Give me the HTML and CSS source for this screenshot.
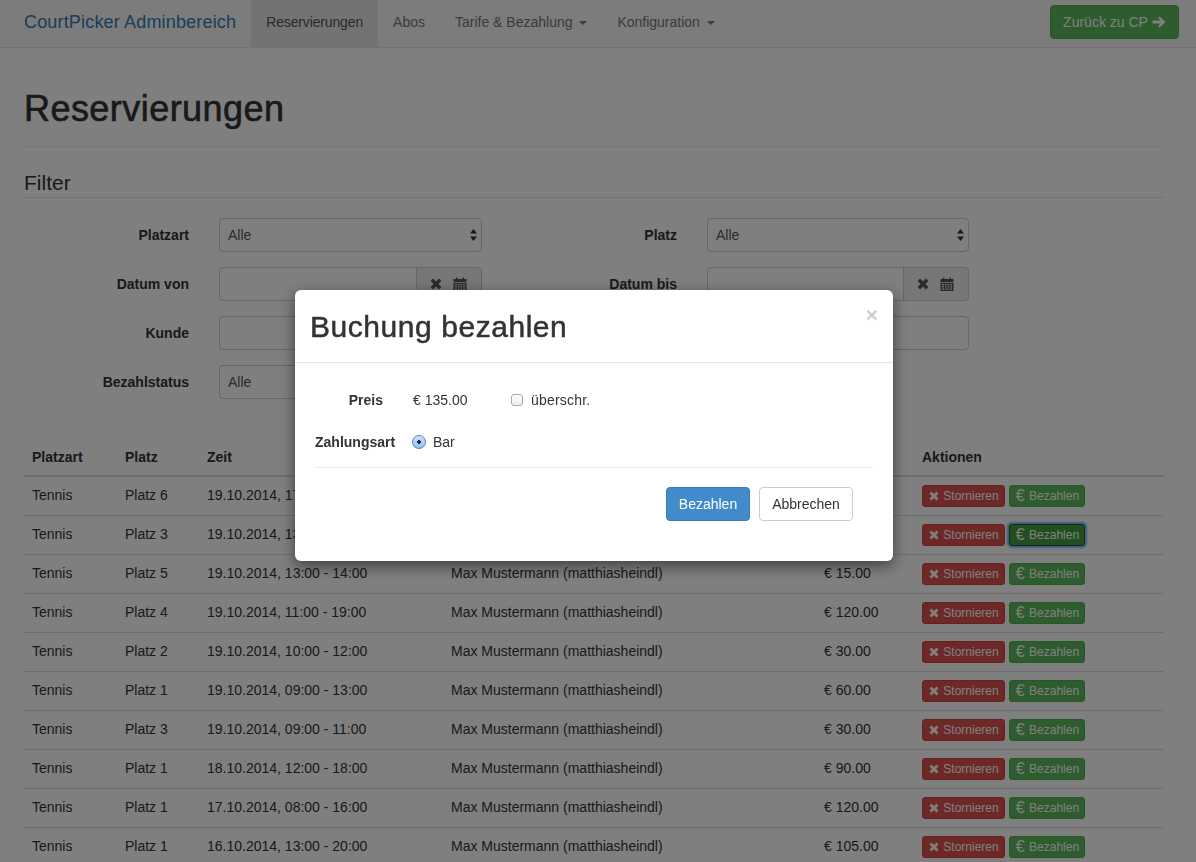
FILE: index.html
```html
<!DOCTYPE html>
<html lang="de">
<head>
<meta charset="utf-8">
<title>CourtPicker Adminbereich</title>
<link rel="stylesheet" href="styles.css">
</head>
<body>
<svg class="defs" width="0" height="0" aria-hidden="true">
  <symbol id="i-x" viewBox="0 0 12 12"><path d="M0.6 3 L3 0.6 L6 3.6 L9 0.6 L11.4 3 L8.4 6 L11.4 9 L9 11.4 L6 8.4 L3 11.4 L0.6 9 L3.6 6 Z"/></symbol>
  <symbol id="i-cal" viewBox="0 0 14 14"><path d="M3 0.5h1.5v1.5h5V0.5H11v1.5h2.5v3H0.5V2H3zM0.5 5.8h13V14H0.5zM2 7v1.3h2V7zm3 0v1.3h1.6V7zm2.6 0v1.3h1.6V7zm2.6 0v1.3H12V7zM2 9.2v1.3h2V9.2zm3 0v1.3h1.6V9.2zm2.6 0v1.3h1.6V9.2zm2.6 0v1.3H12V9.2zM2 11.4v1.3h2v-1.3zm3 0v1.3h1.6v-1.3zm2.6 0v1.3h1.6v-1.3zm2.6 0v1.3H12v-1.3z" fill-rule="evenodd"/></symbol>
  <symbol id="i-arrow" viewBox="0 0 14 12"><path d="M7.6 0.6 L13.6 6 L7.6 11.4 L6.2 10 L8.6 7.6 H0.4 V4.4 H8.6 L6.2 2 Z"/></symbol>
  <symbol id="i-updown" viewBox="0 0 7 12"><path d="M3.5 0 L7 4.6 H0 Z M0 7.4 H7 L3.5 12 Z"/></symbol>
</svg>

<nav class="navbar">
  <a class="brand">CourtPicker Adminbereich</a>
  <ul class="nav">
    <li class="nav-item active">Reservierungen</li>
    <li class="nav-item">Abos</li>
    <li class="nav-item">Tarife &amp; Bezahlung <span class="caret"></span></li>
    <li class="nav-item">Konfiguration <span class="caret"></span></li>
  </ul>
  <a class="btn btn-success btn-back">Zurück zu CP <svg class="ico ico-arrow"><use href="#i-arrow"/></svg></a>
</nav>

<main class="container">
  <h1 class="page-title">Reservierungen</h1>
  <h2 class="legend">Filter</h2>
  <form class="filter">
    <label class="flabel">Platzart</label>
    <div class="select"><select class="control"><option>Alle</option></select><svg class="updown"><use href="#i-updown"/></svg></div>
    <label class="flabel">Platz</label>
    <div class="select"><select class="control"><option>Alle</option></select><svg class="updown"><use href="#i-updown"/></svg></div>

    <label class="flabel">Datum von</label>
    <div class="group"><input class="control group-input" type="text"><span class="addon"><svg class="ico ico-x"><use href="#i-x"/></svg><svg class="ico ico-cal"><use href="#i-cal"/></svg></span></div>
    <label class="flabel">Datum bis</label>
    <div class="group"><input class="control group-input" type="text"><span class="addon"><svg class="ico ico-x"><use href="#i-x"/></svg><svg class="ico ico-cal"><use href="#i-cal"/></svg></span></div>

    <label class="flabel">Kunde</label>
    <input class="control" type="text">
    <label class="flabel"></label>
    <input class="control" type="text">

    <label class="flabel">Bezahlstatus</label>
    <div class="select"><select class="control"><option>Alle</option></select><svg class="updown"><use href="#i-updown"/></svg></div>
  </form>

  <table class="table">
    <colgroup><col class="c1"><col class="c2"><col class="c3"><col class="c4"><col class="c5"><col class="c6"></colgroup>
    <thead><tr><th>Platzart</th><th>Platz</th><th>Zeit</th><th>Kunde</th><th>Preis</th><th>Aktionen</th></tr></thead>
    <tbody>
      <tr><td>Tennis</td><td>Platz 6</td><td>19.10.2014, 17:00 - 20:00</td><td></td><td></td><td><a class="btn-xs red"><svg class="ico ico-xs"><use href="#i-x"/></svg> Stornieren</a><a class="btn-xs green"><span class="euro">€</span> Bezahlen</a></td></tr>
      <tr><td>Tennis</td><td>Platz 3</td><td>19.10.2014, 13:00 - 22:00</td><td></td><td></td><td><a class="btn-xs red"><svg class="ico ico-xs"><use href="#i-x"/></svg> Stornieren</a><a class="btn-xs green focus"><span class="euro">€</span> Bezahlen</a></td></tr>
      <tr><td>Tennis</td><td>Platz 5</td><td>19.10.2014, 13:00 - 14:00</td><td>Max Mustermann (matthiasheindl)</td><td>€ 15.00</td><td><a class="btn-xs red"><svg class="ico ico-xs"><use href="#i-x"/></svg> Stornieren</a><a class="btn-xs green"><span class="euro">€</span> Bezahlen</a></td></tr>
      <tr><td>Tennis</td><td>Platz 4</td><td>19.10.2014, 11:00 - 19:00</td><td>Max Mustermann (matthiasheindl)</td><td>€ 120.00</td><td><a class="btn-xs red"><svg class="ico ico-xs"><use href="#i-x"/></svg> Stornieren</a><a class="btn-xs green"><span class="euro">€</span> Bezahlen</a></td></tr>
      <tr><td>Tennis</td><td>Platz 2</td><td>19.10.2014, 10:00 - 12:00</td><td>Max Mustermann (matthiasheindl)</td><td>€ 30.00</td><td><a class="btn-xs red"><svg class="ico ico-xs"><use href="#i-x"/></svg> Stornieren</a><a class="btn-xs green"><span class="euro">€</span> Bezahlen</a></td></tr>
      <tr><td>Tennis</td><td>Platz 1</td><td>19.10.2014, 09:00 - 13:00</td><td>Max Mustermann (matthiasheindl)</td><td>€ 60.00</td><td><a class="btn-xs red"><svg class="ico ico-xs"><use href="#i-x"/></svg> Stornieren</a><a class="btn-xs green"><span class="euro">€</span> Bezahlen</a></td></tr>
      <tr><td>Tennis</td><td>Platz 3</td><td>19.10.2014, 09:00 - 11:00</td><td>Max Mustermann (matthiasheindl)</td><td>€ 30.00</td><td><a class="btn-xs red"><svg class="ico ico-xs"><use href="#i-x"/></svg> Stornieren</a><a class="btn-xs green"><span class="euro">€</span> Bezahlen</a></td></tr>
      <tr><td>Tennis</td><td>Platz 1</td><td>18.10.2014, 12:00 - 18:00</td><td>Max Mustermann (matthiasheindl)</td><td>€ 90.00</td><td><a class="btn-xs red"><svg class="ico ico-xs"><use href="#i-x"/></svg> Stornieren</a><a class="btn-xs green"><span class="euro">€</span> Bezahlen</a></td></tr>
      <tr><td>Tennis</td><td>Platz 1</td><td>17.10.2014, 08:00 - 16:00</td><td>Max Mustermann (matthiasheindl)</td><td>€ 120.00</td><td><a class="btn-xs red"><svg class="ico ico-xs"><use href="#i-x"/></svg> Stornieren</a><a class="btn-xs green"><span class="euro">€</span> Bezahlen</a></td></tr>
      <tr><td>Tennis</td><td>Platz 1</td><td>16.10.2014, 13:00 - 20:00</td><td>Max Mustermann (matthiasheindl)</td><td>€ 105.00</td><td><a class="btn-xs red"><svg class="ico ico-xs"><use href="#i-x"/></svg> Stornieren</a><a class="btn-xs green"><span class="euro">€</span> Bezahlen</a></td></tr>
    </tbody>
  </table>
</main>

<div class="backdrop"></div>

<section class="modal">
  <header class="modal-header">
    <h3 class="modal-title">Buchung bezahlen</h3>
    <span class="close">×</span>
  </header>
  <div class="modal-body">
    <div class="mrow mrow-price">
      <label class="mlabel">Preis</label>
      <span class="price">€ 135.00</span>
      <input class="check" type="checkbox">
      <span class="checktext">überschr.</span>
    </div>
    <div class="mrow mrow-pay">
      <label class="mlabel-wide">Zahlungsart</label>
      <input class="radio" type="radio" checked>
      <span class="radiotext">Bar</span>
    </div>
    <hr class="divider">
    <div class="actions">
      <a class="btn btn-primary">Bezahlen</a>
      <a class="btn btn-default">Abbrechen</a>
    </div>
  </div>
</section>
</body>
</html>
```
FILE: styles.css
```css
* { box-sizing: border-box; }
html, body { height: 100%; overflow: hidden; }
body {
  margin: 0;
  background: #fff;
  color: #333;
  font: 14px/20px "Liberation Sans", Arial, sans-serif;
}
.defs { position: absolute; }
.ico { display: inline-block; fill: currentColor; }

/* Navbar */
.navbar {
  display: flex;
  align-items: stretch;
  height: 48px;
  padding-left: 24px;
  background: #f8f8f8;
  border-bottom: 1px solid #e7e7e7;
}
.brand {
  color: #337ab7;
  font-size: 18px;
  line-height: 44px;
  letter-spacing: .17px;
  margin-right: 15px;
}
.nav { display: flex; margin: 0; padding: 0; list-style: none; }
.nav-item { padding: 12px 15px 0; color: #777; height: 47px; }
.nav-item.active { background: #e7e7e7; color: #555; letter-spacing: -.14px; }
.caret {
  display: inline-block;
  width: 0;
  height: 0;
  margin-left: 3px;
  vertical-align: middle;
  border-top: 4px solid;
  border-left: 4px solid transparent;
  border-right: 4px solid transparent;
}
.btn {
  display: inline-flex;
  align-items: center;
  justify-content: center;
  height: 34px;
  padding: 0 12px;
  border: 1px solid transparent;
  border-radius: 4px;
  font-size: 14px;
}
.btn-success { background: #5cb85c; border-color: #4cae4c; color: #fff; }
.btn-back { width: 129px; margin: 5px 17px 0 auto; gap: 4px; }
.ico-arrow { width: 14px; height: 12px; }

/* Page */
.container { width: 1140px; margin-left: 24px; }
.page-title {
  margin: 41px 0 20px;
  padding-bottom: 17px;
  border-bottom: 1px solid #eee;
  font-size: 36px;
  line-height: 40px;
  font-weight: 400;
  letter-spacing: .45px;
  -webkit-text-stroke: .6px currentColor;
}
.legend {
  margin: 0 0 20px;
  height: 31px;
  border-bottom: 1px solid #e5e5e5;
  font-size: 21px;
  line-height: 32px;
  font-weight: 400;
}

/* Filter */
.filter {
  display: grid;
  grid-template-columns: 165px 263px 165px 262px;
  column-gap: 30px;
  row-gap: 15px;
  margin-bottom: 40px;
  width: 945px;
}
.flabel { font-weight: 700; text-align: right; line-height: 34px; }
.control {
  display: block;
  width: 100%;
  height: 34px;
  padding: 6px 8px;
  border: 1px solid #ccc;
  border-radius: 4px;
  background: #fff;
  color: #555;
  font: 14px/20px "Liberation Sans", Arial, sans-serif;
  appearance: none;
}
.select { position: relative; }
.updown {
  position: absolute;
  right: 5px;
  top: 11px;
  width: 7px;
  height: 12px;
  fill: #333;
}
.group { display: flex; }
.group-input { flex: 1; min-width: 0; border-radius: 4px 0 0 4px; }
.addon {
  display: flex;
  align-items: center;
  gap: 11px;
  width: 66px;
  padding-left: 13px;
  margin-left: -1px;
  background: #eee;
  border: 1px solid #ccc;
  border-radius: 0 4px 4px 0;
  color: #555;
}
.ico-x { width: 12px; height: 12px; }
.ico-cal { width: 14px; height: 14px; }

/* Table */
.table { width: 1140px; table-layout: fixed; border-collapse: collapse; }
.c1 { width: 93px; }
.c2 { width: 82px; }
.c3 { width: 244px; }
.c4 { width: 373px; }
.c5 { width: 98px; }
.c6 { width: 250px; }
.table th {
  padding: 8px;
  text-align: left;
  font-weight: 700;
  border-bottom: 2px solid #ddd;
}
.table td {
  padding: 8px;
  height: 39px;
  border-top: 1px solid #ddd;
  white-space: nowrap;
  vertical-align: top;
}
.table tbody tr:first-child td { border-top: 0; height: 38px; }
.btn-xs {
  display: inline-block;
  height: 22px;
  padding: 0 5px;
  margin-right: 4px;
  border: 1px solid transparent;
  border-radius: 3px;
  color: #fff;
  font-size: 12px;
  line-height: 20px;
  vertical-align: top;
}
.red { background: #d9534f; border-color: #d43f3a; }
.green { background: #5cb85c; border-color: #4cae4c; }
.green.focus { background: #449d44; border-color: #255625; box-shadow: 0 0 2px 2px rgba(82, 160, 255, .75); }
.ico-xs { width: 12px; height: 10px; vertical-align: -1px; }
.euro {
  display: inline-block;
  width: 11px;
  font-size: 16px;
  line-height: 14px;
  text-align: center;
  vertical-align: -1px;
}

/* Modal */
.backdrop { position: fixed; inset: 0; background: rgba(0, 0, 0, .5); }
.modal {
  position: fixed;
  left: 295px;
  top: 290px;
  width: 598px;
  height: 271px;
  background: #fff;
  border-radius: 6px;
  box-shadow: 0 5px 15px rgba(0, 0, 0, .5);
}
.modal-header {
  position: relative;
  height: 73px;
  padding: 15px;
  border-bottom: 1px solid #e5e5e5;
}
.modal-title {
  margin: 0;
  font-size: 30px;
  line-height: 43px;
  font-weight: 400;
  letter-spacing: .55px;
  -webkit-text-stroke: .5px currentColor;
}
.close {
  position: absolute;
  right: 15px;
  top: 14px;
  color: #000;
  opacity: .2;
  font-size: 21px;
  line-height: 21px;
  font-weight: 700;
}
.modal-body { padding: 0 20px; }
.mrow { display: flex; align-items: center; height: 20px; }
.mrow-price { margin-top: 27px; }
.mrow-pay { margin-top: 22px; }
.mlabel { width: 68px; text-align: right; font-weight: 700; }
.mlabel-wide { width: 80px; text-align: right; font-weight: 700; }
.price { margin-left: 30px; width: 98px; }
.check {
  appearance: none;
  width: 12px;
  height: 12px;
  margin: 0;
  background: linear-gradient(#fff, #ececec);
  border: 1px solid #a9a9a9;
  border-radius: 3px;
}
.checktext { margin-left: 8px; letter-spacing: .2px; }
.radio {
  appearance: none;
  width: 14px;
  height: 14px;
  margin: 0 0 0 17px;
  border: 1px solid #5a7fb5;
  border-radius: 50%;
  background: radial-gradient(circle, #1c2c4a 0, #1c2c4a 1.6px, transparent 2.1px), linear-gradient(#cfe3fb, #8fc0f5);
}
.radiotext { margin-left: 7px; }
.divider { margin: 15px 0 19px; border: 0; border-top: 1px solid #eee; width: 558px; }
.actions { display: flex; justify-content: flex-end; gap: 9px; padding-right: 20px; }
.btn-primary { width: 84px; background: #428bca; border-color: #357ebd; color: #fff; padding: 0; }
.btn-default { width: 94px; background: #fff; border-color: #ccc; color: #333; padding: 0; }
```
